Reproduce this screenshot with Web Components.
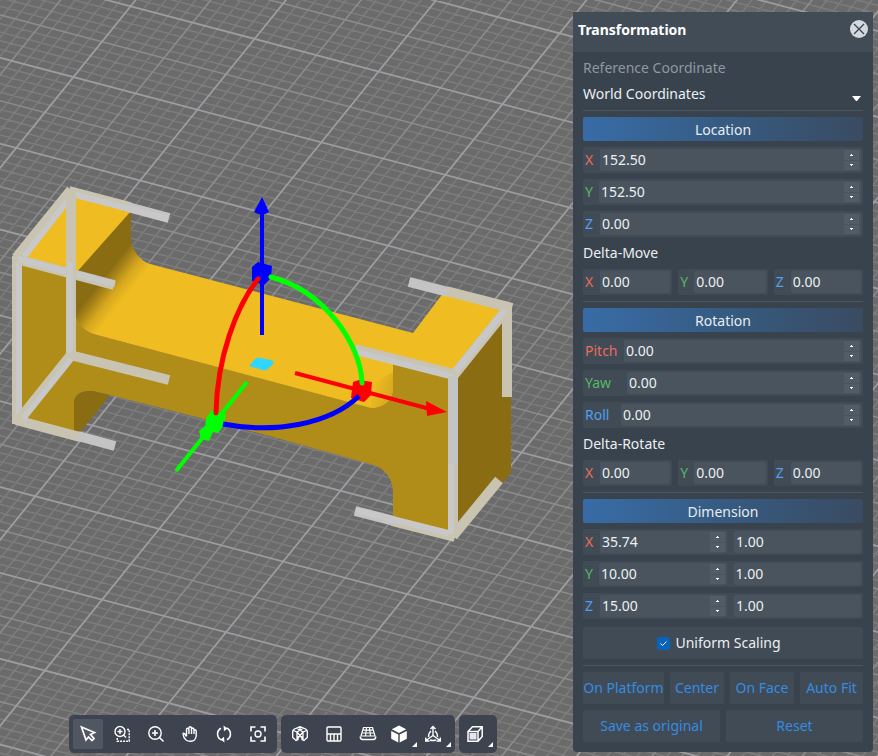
<!DOCTYPE html>
<html lang="en">
<head>
<meta charset="utf-8">
<title>Transformation</title>
<style>
html,body{height:100%;margin:0}
body{font:14px/20px "Noto Sans",sans-serif;color:#eceff1;background:#6b6b6b;overflow:hidden}
</style>
</head>
<body>
<editor-app></editor-app>
<script>
const define = (name, html, setup) => customElements.define(name, class extends HTMLElement {
  constructor() {
    super();
    this.attachShadow({ mode: 'open' });
  }
  connectedCallback() {
    if (this.shadowRoot.childNodes.length) return;
    const t = document.createElement('template');
    t.innerHTML = typeof html === 'function' ? html(this) : html;
    this.shadowRoot.append(t.content.cloneNode(true));
    if (setup) setup(this.shadowRoot, this);
  }
});

/* Build plate, model, bounding box and gizmo */
define('scene-view', `
<style>
:host{display:block;overflow:hidden;background:#6b6b6b}
svg{display:block;width:100%;height:100%}
.minor{stroke:#7d7d7d;stroke-width:1.5}
.mid{stroke:#8c8c8d;stroke-width:1.6}
.major{stroke:#9c9ca1;stroke-width:1.8}
.bar{stroke:#c9c3b2;stroke-width:10;fill:none}
.lit{stroke:#c8c8c9;stroke-width:6;fill:none}
.grey{stroke:#c4c4c4;stroke-width:10;fill:none}
</style>
<svg viewBox="0 0 878 756" preserveAspectRatio="xMinYMin slice" role="img" aria-label="3D model on the build plate">
<defs>
<linearGradient id="fillet" gradientUnits="userSpaceOnUse" x1="104" y1="277" x2="127" y2="295">
<stop offset="0" stop-color="#8a6c13"/><stop offset=".25" stop-color="#a78318"/><stop offset=".6" stop-color="#d5a71e"/><stop offset="1" stop-color="#efbc22"/>
</linearGradient>
<linearGradient id="end" gradientUnits="userSpaceOnUse" x1="372" y1="390" x2="393" y2="398">
<stop offset="0" stop-color="#efbc22"/><stop offset="1" stop-color="#d3a51d"/>
</linearGradient>
</defs>
<g id="grid"></g>
<path fill="#b08c19" d="M16 258L77 274V318L97 335L373 408L393 362V352L454 372V539L393 523V493C393 476 382 466 367 463L240 428L110 395L93 391C80 391 74 395 74 404V437L17 422Z"/>
<path fill="#8a6c13" d="M74 437V404C74 393 82 391 93 391L110 395L79 434Z"/>
<path fill="#efbc22" d="M70 190L131 212L77 275L16 259Z"/>
<path fill="#efbc22" d="M150 264L413 333L447 288L512 304L455 372L393 355V388C393 402 381 408 371 408L97 335L78 318Z"/>
<path fill="url(#end)" d="M371 384L393 372V388C393 402 381 408 371 408Z"/>
<path fill="url(#fillet)" d="M131 211V240C133 252 140 261 152 265L98 335C87 333 80 327 76 317V273Z"/>
<path fill="#8a6c13" d="M454 372L511 304V473L455 540Z"/>
<path class="bar" d="M69 191L130 207"/><path class="grey" d="M128 207L169 218"/>
<path class="lit" d="M72 194L168 219"/>
<path class="bar" d="M71 190L16 258"/><path class="lit" d="M73 194L20 262"/>
<path class="bar" d="M17 256V424"/><path class="lit" d="M19 264V419"/>
<path class="bar" d="M16 259L114 285"/><path class="lit" d="M18 259L115 284"/>
<path class="bar" d="M16 420L80 437"/><path class="grey" d="M78 436L115 446"/>
<path class="bar" d="M71 190V357"/><path class="lit" d="M70 262V357"/>
<path class="bar" d="M70 355L169 380"/>
<path class="bar" d="M71 355L18 421"/><path class="lit" d="M71 359L23 419"/>
<path class="bar" d="M507 306V397"/>
<path class="grey" d="M409 282L448 292"/><path class="bar" d="M446 291L512 308"/>
<path class="bar" d="M454 375L507 309"/><path class="lit" d="M455 372L505 310"/>
<path class="bar" d="M355 349L454 374"/><path class="lit" d="M356 352L450 376"/>
<path class="bar" d="M453 536L499 480"/>
<path class="bar" d="M392 521L455 537"/><path class="grey" d="M355 511L394 521"/><path class="lit" d="M356 510L452 534"/>
<path class="bar" d="M453 372V538"/><path class="lit" d="M451 374V534"/><path class="grey" d="M453 376V464"/>
<path fill="#30d6ff" d="M250 365L255 359Q257 357 260 358L271 360Q275 361 273 364L268 369Q266 371 263 370L252 367Q249 367 250 365Z"/>
<g stroke-width="4" stroke-linecap="butt" fill="none">
<path stroke="#00f" d="M262 335V212"/><path stroke="#f00" d="M295 373L430 409"/>
<path stroke="#0f0" d="M247 382L176 471"/>
</g>
<path fill="#00f" d="M262 197L269 212Q262 217 254 212ZM252 267L258 262L272 266L271 278L264 285L252 281Z"/>
<path fill="#f00" d="M426 401L447 412L427 416ZM353 382L359 380L372 382L371 395L364 402L351 398Z"/>
<path fill="#0f0" d="M206 418L212 410L226 414L224 425L218 433L205 430ZM199 431L206 425L213 432L209 441L201 439Z"/>
<g stroke-width="5" stroke-linecap="round" fill="none">
<path stroke="#00f" d="M223 424C275 434 330 424 359 396" stroke-linecap="butt"/>
<path stroke="#0f0" d="M271 277C325 291 361 345 362 383"/>
<path stroke="#f00" d="M258 279C236 307 217 358 216 413"/>
</g>
</svg>`, root => {
  const A = [123.95, 32.6], B = [57.2, -70.8], O = [321.3, 142.3];
  const at = (u, v) => `${(O[0] + u * A[0] + v * B[0]).toFixed(2)} ${(O[1] + u * A[1] + v * B[1]).toFixed(2)}`;
  const d = { minor: '', mid: '', major: '' };
  for (let i = -100; i <= 100; i++) {
    const k = i % 10 === 0 ? 'major' : i % 5 === 0 ? 'mid' : 'minor', p = i / 10;
    d[k] += `M${at(p, -14)}L${at(p, 14)}M${at(-14, p)}L${at(14, p)}`;
  }
  root.getElementById('grid').innerHTML = Object.entries(d).map(([k, v]) => `<path class="${k}" d="${v}"/>`).join('');
});

/* Panel header and body */
define('tool-window', `
<style>
:host{display:block;background:#38434e;border-radius:4px}
header{display:flex;align-items:center;justify-content:space-between;height:40px;padding:0 5px 4px;background:#414c57;box-sizing:border-box}
h1{margin:0;font-size:14px;line-height:20px;font-weight:700;color:#fff}
button{width:18px;height:18px;padding:0;border:0;border-radius:50%;background:#d5d9dc;display:grid;place-items:center;margin-bottom:2px}
section{padding:6px 10px 10px;display:flex;flex-direction:column;gap:6px}
</style>
<header><h1><slot name="title"></slot></h1><button aria-label="Close"><svg width="12" height="12" viewBox="0 0 12 12" stroke="#3b4855" stroke-width="1.4"><path d="M1 1L11 11M11 1L1 11"/></svg></button></header>
<section><slot></slot></section>`);

define('section-title', `
<style>
:host{display:block}
h2{margin:0;height:24px;font-size:14px;line-height:26px;font-weight:400;text-align:center;border-radius:2px;background:linear-gradient(90deg,#386ca7,#365b82 50%,#3a4b62);color:#e8ecf0}
</style><h2><slot></slot></h2>`);

define('rule-line', `<style>:host{display:block}hr{margin:0;border:0;height:1px;background:#4b5661}</style><hr>`);

define('coord-select', `
<style>
:host{display:block}
label{display:block;color:#8f98a0;line-height:20px}
.box{display:grid;align-items:center;margin-top:4px;margin-bottom:-2px}
select,svg{grid-area:1/1}
select{appearance:none;border:0;background:none;color:#eceff1;font:inherit;height:24px;line-height:24px;padding:0;margin:0}
svg{justify-self:end;margin:8px 2px 0 0;pointer-events:none}
</style>
<label for="s">Reference Coordinate</label>
<div class="box"><select id="s"><option>World Coordinates</option></select>
<svg width="9" height="5" viewBox="0 0 9 5" fill="#fff"><path d="M0 0H9L5 5H4Z"/></svg></div>`);

const spin = `<span class="spin"><button aria-label="Increase"><svg width="3" height="2" viewBox="0 0 3 2" shape-rendering="crispEdges"><path d="M1 0h1v1h1v1H0V1h1z"/></svg></button><button aria-label="Decrease"><svg width="3" height="2" viewBox="0 0 3 2" shape-rendering="crispEdges"><path d="M0 0h3v1H2v1H1V1H0z"/></svg></button></span>`;
define('axis-field', el => `
<style>
:host{display:block;min-width:0}
.row{display:flex;height:26px;padding:2px;box-sizing:border-box;border-radius:2px;background:#404b56}
.main{display:flex;flex:1;min-width:0;gap:7px}
label{flex:none;width:var(--label,15px);line-height:22px}
.x{color:#ec6b5c}.y{color:#57b765}.z{color:#519ff0}
.edit{display:flex;flex:1 1 0;min-width:0;background:#49545f;border-radius:2px;padding-right:2px}
input{flex:1;width:0;min-width:0;border:0;padding:0 0 0 2px;background:none;color:#eceff1;font:inherit;line-height:20px}
.spin{display:flex;flex-direction:column;width:15px;padding:1px 0;flex:none}
.spin button{flex:1;border:0;padding:0;background:#505d68;display:grid;place-items:center}
.spin button+button{margin-top:1px}
.spin svg{fill:#fff}
</style>
<div class="row">
<label for="v" class="${el.getAttribute('axis')}">${el.getAttribute('label')}</label>
<div class="main"><div class="edit"><input id="v" value="${el.getAttribute('value')}">${el.hasAttribute('spin') ? spin : ''}</div>
${el.hasAttribute('scale') ? `<div class="edit"><input aria-label="${el.getAttribute('label')} scale" value="${el.getAttribute('scale')}"></div>` : ''}</div>
</div>`);

define('field-row', `
<style>
:host{display:block}
p{margin:0;line-height:20px}
div{display:grid;grid-template-columns:repeat(3,1fr);gap:6px;margin-top:6px}
</style><p><slot name="caption"></slot></p><div><slot></slot></div>`);

define('check-option', `
<style>
:host{display:block;margin:2px 0 0}
label{display:flex;align-items:center;justify-content:center;gap:5px;height:32px;padding-right:8px;background:#404b56;border-radius:2px}
.tick{display:grid;width:13px;height:13px}
input,svg{grid-area:1/1}
input{appearance:none;margin:0;width:13px;height:13px;border-radius:2px;background:#0a63bb}
svg{pointer-events:none}
</style>
<label><span class="tick"><input type="checkbox" checked><svg width="13" height="13" viewBox="0 0 13 13" fill="none" stroke="#fff"><path d="M3.500 6.500L5.500 8.500L9.500 4.500"/></svg></span><slot></slot></label>`);

define('action-button', `
<style>
:host{display:block;min-width:0}
button{width:100%;height:32px;border:0;padding:0;border-radius:2px;background:#404b56;color:#358be2;font:inherit;white-space:nowrap}
</style><button><slot></slot></button>`);

define('button-row', `
<style>:host{display:grid;gap:6px;grid-template-columns:var(--cols,1fr 1fr)}</style><slot></slot>`);

define('transform-panel', `
<style>
:host{display:block}
</style>
<tool-window><span slot="title">Transformation</span>
<coord-select></coord-select>
<rule-line></rule-line>
<section-title>Location</section-title>
<axis-field axis="x" label="X" value="152.50" spin></axis-field>
<axis-field axis="y" label="Y" value="152.50" spin style="--label:14px"></axis-field>
<axis-field axis="z" label="Z" value="0.00" spin></axis-field>
<field-row><span slot="caption">Delta-Move</span>
<axis-field axis="x" label="X" value="0.00"></axis-field><axis-field axis="y" label="Y" value="0.00" style="--label:14px"></axis-field><axis-field axis="z" label="Z" value="0.00"></axis-field></field-row>
<rule-line></rule-line>
<section-title>Rotation</section-title>
<axis-field axis="x" label="Pitch" value="0.00" spin style="--label:39px"></axis-field>
<axis-field axis="y" label="Yaw" value="0.00" spin style="--label:42px"></axis-field>
<axis-field axis="z" label="Roll" value="0.00" spin style="--label:36px"></axis-field>
<field-row><span slot="caption">Delta-Rotate</span>
<axis-field axis="x" label="X" value="0.00"></axis-field><axis-field axis="y" label="Y" value="0.00" style="--label:14px"></axis-field><axis-field axis="z" label="Z" value="0.00"></axis-field></field-row>
<rule-line></rule-line>
<section-title>Dimension</section-title>
<axis-field axis="x" label="X" value="35.74" scale="1.00" spin></axis-field>
<axis-field axis="y" label="Y" value="10.00" scale="1.00" spin style="--label:14px"></axis-field>
<axis-field axis="z" label="Z" value="15.00" scale="1.00" spin></axis-field>
<check-option>Uniform Scaling</check-option>
<rule-line></rule-line>
<button-row style="--cols:81fr 54fr 64fr 63fr"><action-button>On Platform</action-button><action-button>Center</action-button><action-button>On Face</action-button><action-button>Auto Fit</action-button></button-row>
<button-row><action-button>Save as original</action-button><action-button>Reset</action-button></button-row>
</tool-window>`);

const icons = {
  select: '<path stroke-width="1.7" d="M1.500 1L14.500 6.500L10.500 8.500L14 12.500L12 14.500L8.500 11L6 14Z"/>',
  area: '<circle cx="6" cy="5.500" r="5"/><path d="M6 3V8M3.500 5.500H8.500M9.500 9L12 11.500"/><path stroke-dasharray="2 1" d="M13 3.500H15.200V15.200H3.200V11.500"/>',
  zoom: '<circle cx="7" cy="7" r="6.200"/><path stroke-width="1.600" d="M7 4V10M4 7H10M11.500 11.500L15.500 15.500"/>',
  pan: '<path d="M4.500 10.500L2.500 7.500Q1 6.500 1 8Q1.500 12 4 14Q6 15.500 9 15.300Q13.500 15 14.200 10V5Q14 3.700 13 3.700Q12 3.700 12 5V8M4.500 10V3.500Q4.600 2.300 5.600 2.300Q6.800 2.300 6.900 3.500V8M6.900 3V2Q7 .8 8.200 .8Q9.400 .8 9.500 2V8M9.500 3.200Q9.700 2 10.800 2Q12 2.200 12 3.500V7"/>',
  orbit: '<path stroke-width="1.600" d="M5.500 14A6.500 6.500 0 0 1 5 2.300M10.500 2A6.500 6.500 0 0 1 11 13.700"/><path fill="#fff" stroke="none" d="M7.500 -.5L11.500 2.500L8 5.200ZM8.500 16.500L4.500 13.500L8 10.800Z"/>',
  focus: '<circle cx="8" cy="8" r="3"/><path stroke-width="1.600" d="M1 5.500V1H5.500M10.500 1H15V5.500M15 10.500V15H10.500M5.500 15H1V10.500"/>',
  mesh: '<path stroke-width="1.300" d="M8 .7L14 3.200L15.300 5V11.500L12 14.500L10 13.500V11L8 10L6 11V13.500L4 14.500L.7 11.500V5L2 3.200ZM1.500 4.500L5 6L8 4L11 6L14.500 4.500M5 6V14M11 6V14M5 2.500L8 4L11 2.500M8 .7V4M5 6L10 12M11 6L6 12"/>',
  fill: '<rect x="1" y="1" width="14" height="14" rx="1"/><path d="M1 8H15M4.500 8V15M8 8V15M11.500 8V15"/>',
  plate: '<path stroke-width="1.200" d="M3.500 1.500H12.500L15 10H1ZM2.700 4.200H13.300M1.800 7H14.200M6.500 1.500L5.500 10M9.500 1.500L10.500 10"/><path stroke-width="1.500" d="M.3 10.500Q.3 13.500 2.500 13.500H13.500Q15.700 13.500 15.700 10.500"/>',
  solid: '<path fill="#fff" stroke="none" d="M8 -.4L15.200 3.300L8 7L.8 3.300ZM.2 4.900L7.300 8.400V16.400L.2 12.700ZM15.800 4.900L8.700 8.400V16.400L15.800 12.700Z"/>',
  axes: '<path d="M8 1V9.500L1 14.500M8 9.500L15 14.500M5.500 3L8 .5L10.500 3M.7 11.500V15H4.500M15.300 11.500V15H11.500"/><path d="M6 5Q3.500 7 3.500 11M10 5Q12.500 7 12.500 11M5 14Q8 15 11 14"/>',
  view: '<path stroke-width="1.500" d="M1 5.500L5.500 .8H15.200V10.500L11 15.200H1ZM1 5.500H11V15M11 5.500L15 1"/><path fill="#e4e7ea" stroke="none" d="M2.500 7H9.500V13.500H2.500Z"/>'
};
define('tool-button', el => `
<style>
:host{display:block}
button{display:flex;align-items:center;justify-content:center;position:relative;width:30px;height:30px;border:0;padding:0;border-radius:2px;background:none}
button.active{background:#505762}
button.menu{padding-right:6px}
.icon{fill:none;stroke:#fff;stroke-width:1.400;overflow:visible}
.more{position:absolute;right:0;bottom:2px;fill:#fff}
</style>
<button class="${el.className}" aria-label="${el.getAttribute('icon')}"><svg class="icon" width="16" height="16" viewBox="0 0 16 16">${icons[el.getAttribute('icon')]}</svg>${el.className === 'menu' ? '<svg class="more" width="5" height="5" viewBox="0 0 5 5"><path d="M5 0V5H0Z"/></svg>' : ''}</button>`);

define('tool-group', `
<style>:host{display:flex;gap:4px;padding:4px;border-radius:5px;background:#3d4450}</style><slot></slot>`);

define('view-toolbar', `
<style>:host{display:flex;gap:4px}</style>
<tool-group><tool-button icon="select" class="active"></tool-button><tool-button icon="area"></tool-button><tool-button icon="zoom"></tool-button><tool-button icon="pan"></tool-button><tool-button icon="orbit"></tool-button><tool-button icon="focus"></tool-button></tool-group>
<tool-group><tool-button icon="mesh"></tool-button><tool-button icon="fill"></tool-button><tool-button icon="plate"></tool-button><tool-button icon="solid" class="menu"></tool-button><tool-button icon="axes" class="menu"></tool-button></tool-group>
<tool-group><tool-button icon="view" class="menu"></tool-button></tool-group>`);

define('editor-app', `
<style>
:host{display:grid;height:100%;min-height:0}
scene-view,.over{grid-area:1/1;min-width:0;min-height:0}
.over{display:grid;grid-template-columns:1fr 300px;gap:8px;padding:12px 5px 3px 0;z-index:1;align-items:start}
view-toolbar{justify-self:center;align-self:end}
</style>
<scene-view></scene-view>
<div class="over"><view-toolbar></view-toolbar><transform-panel></transform-panel></div>`);
</script>
</body>
</html>
